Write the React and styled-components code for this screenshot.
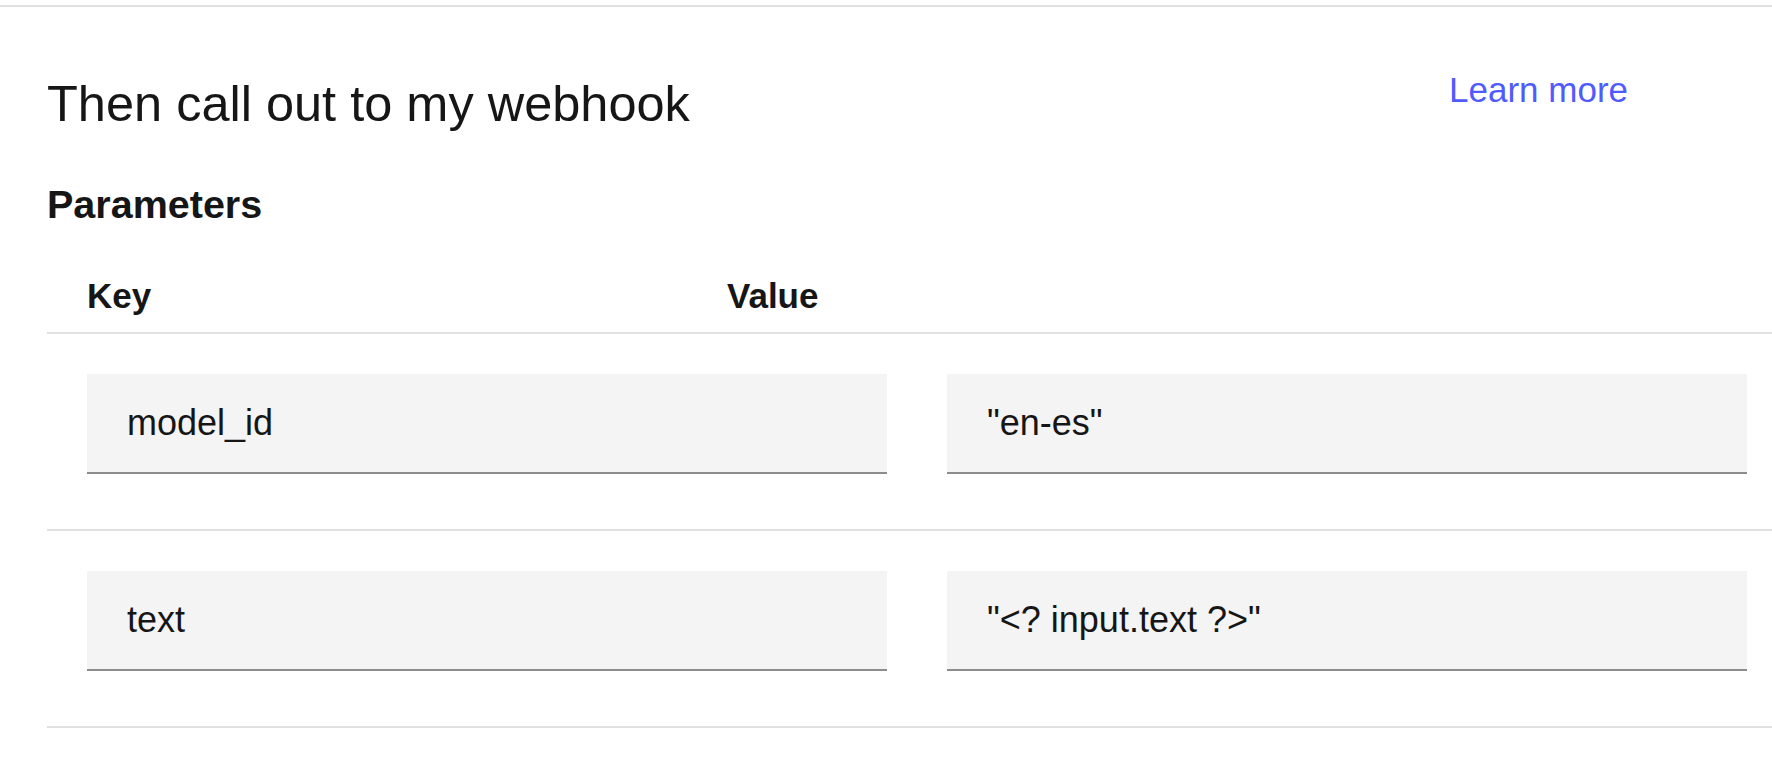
import React from 'react'
import styled, { createGlobalStyle } from 'styled-components'

const GlobalStyle = createGlobalStyle`
  html, body {
    margin: 0;
    padding: 0;
    background: #ffffff;
    font-family: "Liberation Sans", Arial, sans-serif;
    color: #161616;
  }
`

const Page = styled.div`
  padding-top: 5px;
  overflow: hidden;
`

const Section = styled.section`
  border-top: 2px solid #e0e0e0;
  padding-left: 47px;
`

const HeaderRow = styled.div`
  display: flex;
  justify-content: space-between;
  align-items: flex-start;
  padding-top: 62px;
  padding-right: 144px;
`

const Title = styled.h2`
  margin: 5px 0 0;
  font-size: 50.5px;
  line-height: 60px;
  font-weight: 400;
  color: #161616;
`

const LearnMore = styled.a`
  font-size: 35px;
  line-height: 42px;
  color: #4f5bff;
  text-decoration: none;
  cursor: pointer;
`

const SubTitle = styled.h3`
  margin: 46px 0 0;
  font-size: 39.5px;
  line-height: 48px;
  font-weight: 700;
  color: #161616;
`

const Table = styled.div`
  margin-top: 47px;
`

const HeadRow = styled.div`
  display: grid;
  grid-template-columns: 640px 1fr;
  padding: 0 0 15px 40px;
  border-bottom: 2px solid #e0e0e0;
`

const HeadCell = styled.div`
  font-size: 35px;
  line-height: 42px;
  font-weight: 700;
  color: #161616;
`

const Row = styled.div`
  display: grid;
  grid-template-columns: 800px 800px;
  column-gap: 60px;
  padding: 40px 0 55px 40px;
  border-bottom: 2px solid #e0e0e0;
`

const Field = styled.div`
  display: flex;
  align-items: center;
  box-sizing: border-box;
  height: 100px;
  padding: 0 40px;
  background: #f4f4f4;
  border-bottom: 2px solid #8d8d8d;
  font-size: 36px;
  color: #161616;
  white-space: nowrap;
`

const params = [
  { key: 'model_id', value: '"en-es"' },
  { key: 'text', value: '"<? input.text ?>"' },
]

export default function App() {
  return (
    <Page>
      <GlobalStyle />
      <Section>
        <HeaderRow>
          <Title>Then call out to my webhook</Title>
          <LearnMore>Learn more</LearnMore>
        </HeaderRow>
        <SubTitle>Parameters</SubTitle>
        <Table>
          <HeadRow>
            <HeadCell>Key</HeadCell>
            <HeadCell>Value</HeadCell>
          </HeadRow>
          {params.map(p => (
            <Row key={p.key}>
              <Field>{p.key}</Field>
              <Field>{p.value}</Field>
            </Row>
          ))}
        </Table>
      </Section>
    </Page>
  )
}
